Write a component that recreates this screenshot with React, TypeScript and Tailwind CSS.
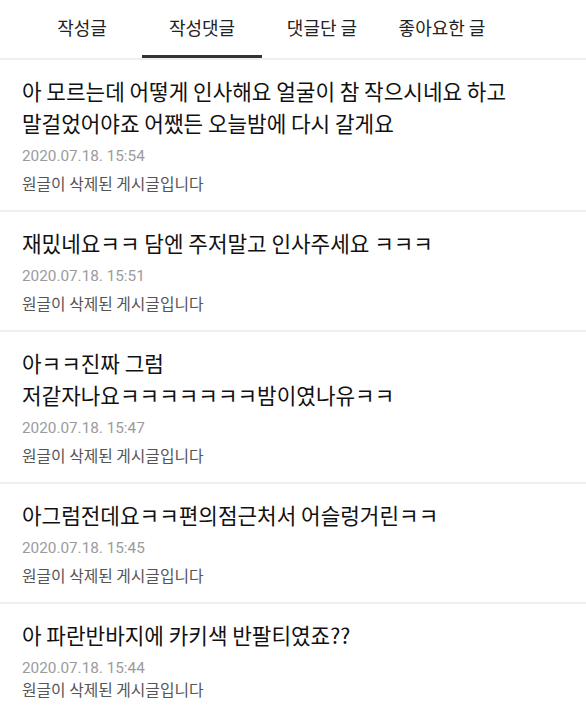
const tabs = ["작성글", "작성댓글", "댓글단 글", "좋아요한 글"];

const comments = [
	{
		text: "아 모르는데 어떻게 인사해요 얼굴이 참 작으시네요 하고\n말걸었어야죠 어쨌든 오늘밤에 다시 갈게요",
		date: "2020.07.18. 15:54",
	},
	{ text: "재밌네요ㅋㅋ 담엔 주저말고 인사주세요 ㅋㅋㅋ", date: "2020.07.18. 15:51" },
	{ text: "아ㅋㅋ진짜 그럼\n저같자나요ㅋㅋㅋㅋㅋㅋㅋ밤이였나유ㅋㅋ", date: "2020.07.18. 15:47" },
	{ text: "아그럼전데요ㅋㅋ편의점근처서 어슬렁거린ㅋㅋ", date: "2020.07.18. 15:45" },
	{ text: "아 파란반바지에 카키색 반팔티였죠??", date: "2020.07.18. 15:44" },
];

export default function App() {
	return (
		<div className="w-[586px] h-[705px] bg-white overflow-hidden font-['Noto_Sans_CJK_KR',sans-serif]">
			<div className="flex px-[22px] border-b-2 border-[#efefef]">
				{tabs.map((t, i) => (
					<div key={t} className="w-[120px] flex flex-col">
						<div className="h-[55px] flex items-center justify-center text-[18px] text-[#222]">
							{t}
						</div>
						<div className={i === 1 ? "h-[3px] bg-[#333]" : "h-[3px]"} />
					</div>
				))}
			</div>
			{comments.map((c, i) => (
				<_item key={i} text={c.text} date={c.date} last={i === comments.length - 1} />
			))}
		</div>
	);
}

//
function _item({ text, date, last }: { text: string; date: string; last: boolean }) {
	return (
		<div className={last ? "px-[22px] pt-[15px]" : "px-[22px] pt-[15px] pb-[12px] border-b-2 border-[#efefef]"}>
			<div className="text-[21.3px] leading-[32px] text-[#111] whitespace-pre-line">{text}</div>
			<div className="mt-[3px] text-[15.3px] leading-[28px] text-[#9b9b9b] font-['Roboto',sans-serif]">
				{date}
			</div>
			<div className={last ? "-mt-[2px] text-[15.8px] leading-[20px] text-[#555]" : "text-[15.8px] leading-[28px] text-[#555]"}>
				원글이 삭제된 게시글입니다
			</div>
		</div>
	);
}
